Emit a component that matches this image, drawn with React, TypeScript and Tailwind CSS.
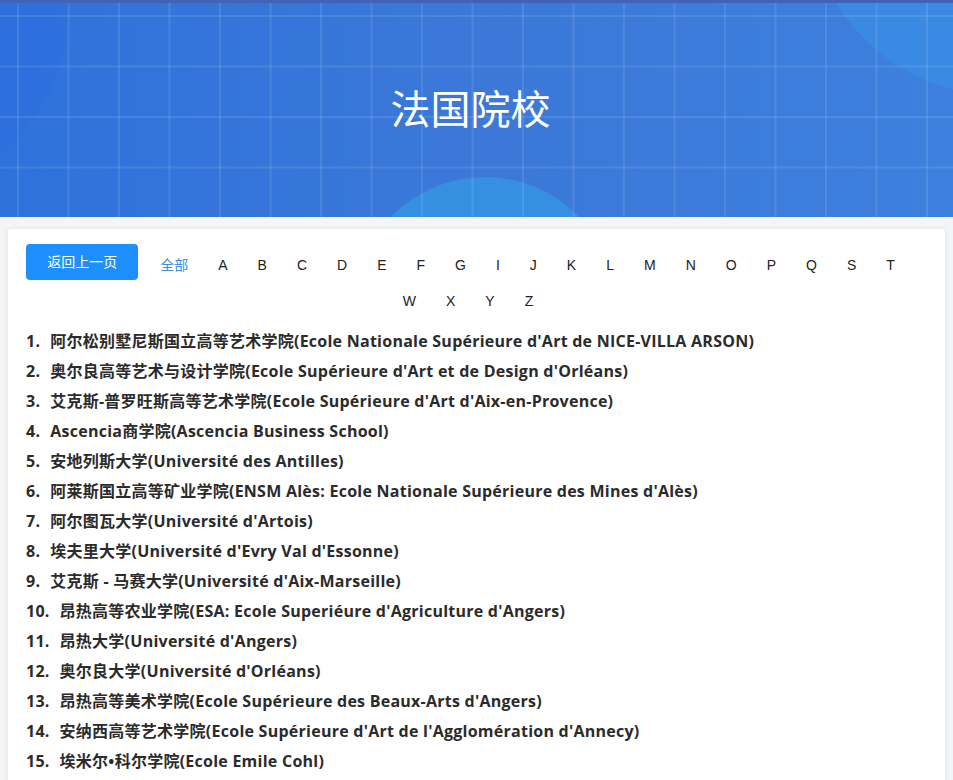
const letters = ['A', 'B', 'C', 'D', 'E', 'F', 'G', 'I', 'J', 'K', 'L', 'M', 'N', 'O', 'P', 'Q', 'S', 'T', 'W', 'X', 'Y', 'Z']

const schools = [
  "阿尔松别墅尼斯国立高等艺术学院(Ecole Nationale Supérieure d'Art de NICE-VILLA ARSON)",
  "奥尔良高等艺术与设计学院(Ecole Supérieure d'Art et de Design d'Orléans)",
  "艾克斯-普罗旺斯高等艺术学院(Ecole Supérieure d'Art d'Aix-en-Provence)",
  "Ascencia商学院(Ascencia Business School)",
  "安地列斯大学(Université des Antilles)",
  "阿莱斯国立高等矿业学院(ENSM Alès: Ecole Nationale Supérieure des Mines d'Alès)",
  "阿尔图瓦大学(Université d'Artois)",
  "埃夫里大学(Université d'Evry Val d'Essonne)",
  "艾克斯 - 马赛大学(Université d'Aix-Marseille)",
  "昂热高等农业学院(ESA: Ecole Superiéure d'Agriculture d'Angers)",
  "昂热大学(Université d'Angers)",
  "奥尔良大学(Université d'Orléans)",
  "昂热高等美术学院(Ecole Supérieure des Beaux-Arts d'Angers)",
  "安纳西高等艺术学院(Ecole Supérieure d'Art de l'Agglomération d'Annecy)",
  "埃米尔•科尔学院(Ecole Emile Cohl)",
]

function HeaderArt() {
  const xs = Array.from({ length: 20 }, (_, i) => 17 + i * 50.5)
  const ys = Array.from({ length: 5 }, (_, i) => 12 + i * 50.5)
  return (
    <svg className="absolute inset-0" width="953" height="214" viewBox="0 0 953 214">
      <circle cx="-110" cy="10" r="178" fill="#2c6edd" opacity="0.55" />
      <circle cx="1000" cy="-100" r="192" fill="#3a8ae3" />
      <circle cx="485" cy="305" r="131" fill="#3590e2" />
      {xs.map((x) => (
        <rect key={'v' + x} x={x} y="0" width="2" height="214" fill="#ffffff" opacity="0.1" />
      ))}
      {ys.map((y) => (
        <rect key={'h' + y} x="0" y={y} width="953" height="2" fill="#ffffff" opacity="0.1" />
      ))}
    </svg>
  )
}

export default function App() {
  return (
    <div className="min-h-[780px] bg-[#f4f5f7] font-['Liberation_Sans','Noto_Sans_CJK_SC',sans-serif]">
      <div className="h-[3px] bg-[#4262b6]" />
      <header className="relative h-[214px] overflow-hidden bg-linear-to-r from-[#2f72dc] via-[#3b78d8] to-[#3e80de]">
        <HeaderArt />
        <h1 className="relative flex h-full items-center justify-center pb-[6px] pr-[12px] text-[40px] font-normal text-white font-['Noto_Sans_CJK_SC',sans-serif]">
          法国院校
        </h1>
      </header>

      <main className="mx-[8px] mt-[12px] rounded-[3px] bg-white pt-[15px] pb-6 shadow-[0_0_6px_rgba(0,0,0,0.08)]">
        <nav className="ml-[10px] flex w-[900px] flex-wrap items-start justify-center text-[14px] text-[#222]">
          <button className="mr-[7px] h-[36px] w-[112px] rounded-[4px] bg-[#1e8ffd] text-[14px] text-white">
            返回上一页
          </button>
          <span className="px-[15px] pt-[6px] leading-[30px] text-[#3d8be0]">全部</span>
          {letters.map((l) => (
            <span key={l} className="px-[15px] pt-[6px] leading-[30px]">
              {l}
            </span>
          ))}
        </nav>

        <ol className="mt-[10px] pl-[18px] text-[16px] font-bold leading-[30px] tracking-[0.25px] text-[#2b2b2b] font-['Open_Sans','Noto_Sans_CJK_SC',sans-serif]">
          {schools.map((s, i) => (
            <li key={i} className="flex">
              <span className="mr-[10px]">{i + 1}.</span>
              <span>{s}</span>
            </li>
          ))}
        </ol>
      </main>
    </div>
  )
}
